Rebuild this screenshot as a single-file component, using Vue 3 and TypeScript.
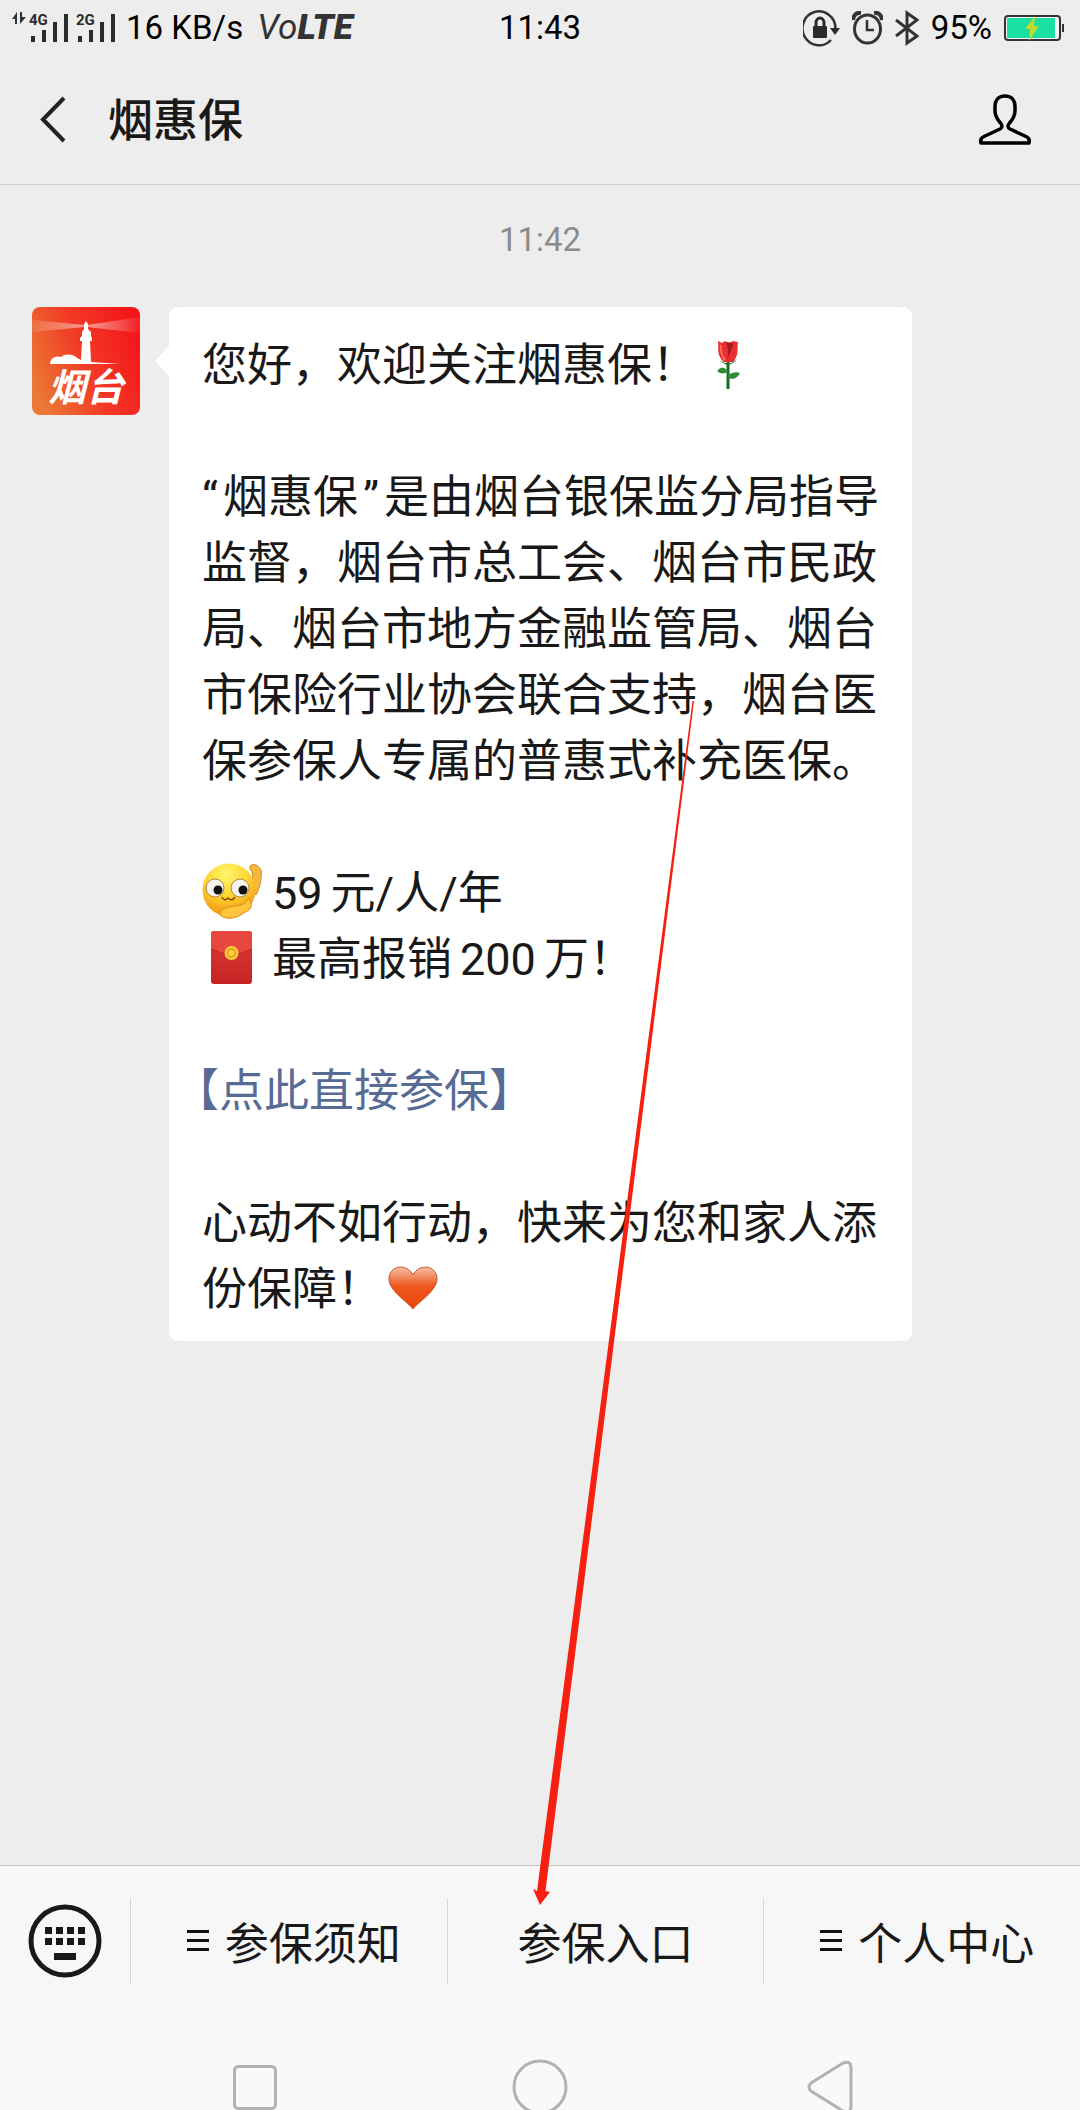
<script setup lang="ts">
interface MenuItem {
  label: string
  expandable: boolean
}

const menu: MenuItem[] = [
  { label: '参保须知', expandable: true },
  { label: '参保入口', expandable: false },
  { label: '个人中心', expandable: true },
]

const keyColumns: number[] = [16, 27, 38, 49]
const keyRows: number[] = [23, 34]
</script>

<template>
  <div class="page">
    <div class="status">
      <div class="status-left">
        <svg class="signal" width="108" height="34" viewBox="0 0 108 34" aria-hidden="true">
          <path d="M0 8 L5 1 V13 H3 V8 Z M8 1 V13 L14 6 H10 V1 Z" fill="#333" />
          <text x="17" y="14" class="net">4G</text>
          <path d="M19 25h4v6h-4z M30 19h4v12h-4z M41 11h4v20h-4z M52 3h4v28h-4z" fill="#2b2b2b" />
          <text x="64" y="14" class="net">2G</text>
          <path d="M66 25h4v6h-4z M77 19h4v12h-4z M88 11h4v20h-4z M99 3h4v28h-4z" fill="#2b2b2b" />
        </svg>
        <span>16 KB/s</span>
        <span class="volte">Vo<b>LTE</b></span>
      </div>
      <span>11:43</span>
      <div class="status-right">
        <svg width="37" height="38" viewBox="0 0 37 38" fill="none" aria-hidden="true">
          <path d="M28 31 A16.500 17 0 1 1 32.500 19" stroke="#333" stroke-width="2.500" />
          <path d="M27 19h10l-5 7z" fill="#2b2b2b" />
          <rect x="10" y="17" width="14" height="12" rx="1" fill="#2b2b2b" />
          <path d="M13 18v-4a4 5 0 0 1 8 0v4" stroke="#2b2b2b" stroke-width="3" />
        </svg>
        <svg width="31" height="34" viewBox="0 0 31 34" fill="none" aria-hidden="true">
          <ellipse cx="15.500" cy="18" rx="13" ry="14" stroke="#333" stroke-width="3" />
          <path d="M15 9v10h7" stroke="#333" stroke-width="2.500" />
          <path d="M1 9 Q2 1 9 2" stroke="#333" stroke-width="4" />
          <path d="M30 9 Q29 1 22 2" stroke="#333" stroke-width="4" />
        </svg>
        <svg class="bluetooth" width="24" height="36" viewBox="0 0 24 36" fill="none" stroke="#333" stroke-width="3" aria-hidden="true">
          <path d="M1 10 L22 26 L12 33 V3 L22 10 L1 26" />
        </svg>
        <span>95%</span>
        <svg class="battery" width="64" height="28" viewBox="0 0 64 28" aria-hidden="true">
          <rect x="1" y="2" width="55" height="24" rx="3" fill="#f4f4f4" stroke="#333" stroke-width="2" />
          <rect x="3" y="4" width="48" height="20" fill="#18e0a0" />
          <rect x="58" y="10" width="2" height="8" fill="#333" />
          <path d="M31 2 L21 15 H26 L25 27 L35 12 H30 Z" fill="#c3d82c" />
        </svg>
      </div>
    </div>

    <header class="header">
      <button class="icon-button" type="button" aria-label="返回">
        <svg width="26" height="48" viewBox="0 0 26 48" fill="none" stroke="#222" stroke-width="4">
          <path d="M24 3 L3 24.500 L24 46" />
        </svg>
      </button>
      <h1>烟惠保</h1>
      <button class="icon-button" type="button" aria-label="公众号资料">
        <svg width="54" height="52" viewBox="0 0 54 52" fill="none" stroke="#000" stroke-width="3.500" stroke-linejoin="round">
          <path d="M27 3 C20 3 17 8 17 13 V18 C17 24 20 27 22.500 30 C25 33 24 35 22 36 L6 43.500 C3 45 2 47 3 50 H51 C52 47 51 45 48 43.500 L32 36 C30 35 29 33 31.500 30 C34 27 37 24 37 18 V13 C37 8 34 3 27 3 Z" />
        </svg>
      </button>
    </header>

    <main class="chat">
      <time class="stamp">11:42</time>
      <div class="message">
        <svg class="avatar" width="108" height="108" viewBox="0 0 108 108" role="img" aria-label="烟台">
          <defs>
            <linearGradient id="avatarBg" x1="0" y1="0.700" x2="1" y2="0.300">
              <stop offset="0" stop-color="#ea7a33" />
              <stop offset="0.500" stop-color="#f23a26" />
              <stop offset="1" stop-color="#f4161a" />
            </linearGradient>
            <linearGradient id="beamLeft" x1="0" x2="1">
              <stop offset="0" stop-color="#fff" stop-opacity="0.100" />
              <stop offset="1" stop-color="#fff" stop-opacity="0.500" />
            </linearGradient>
            <linearGradient id="beamRight" x1="1" x2="0">
              <stop offset="0" stop-color="#fff" stop-opacity="0.050" />
              <stop offset="1" stop-color="#fff" stop-opacity="0.500" />
            </linearGradient>
          </defs>
          <rect width="108" height="108" rx="8" fill="url(#avatarBg)" />
          <path d="M53 18 L0 13 V25 L53 20 Z" fill="url(#beamLeft)" />
          <path d="M55 18 L108 10 V26 L55 20 Z" fill="url(#beamRight)" />
          <path d="M54 14 L56 17 V22 L59 25 V29 L60 31 V34 H58 L59 55 L88 57 H18 C18 51 24 48 29 50 C33 46 42 47 45 51 L49 53 L50 34 H48 V31 L50 29 V25 L52 22 V17 Z" fill="#fff" />
          <text x="54" y="94" text-anchor="middle" class="avatar-name">烟台</text>
        </svg>

        <div class="bubble">
          <p>
            您好，欢迎关注烟惠保！<svg class="emoji" width="60" height="60" viewBox="0 0 60 60" role="img" aria-label="玫瑰">
              <path d="M31 28 V56" stroke="#176b2b" stroke-width="3" />
              <path d="M20 38 Q25 31 31 38 Q26 43 20 38 Z M31 42 Q37 38 43 40 Q39 48 31 45 Z" fill="#2d8b35" />
              <path d="M23 27 Q31 37 40 26 L34 30 L28 30 Z" fill="#28753a" />
              <path d="M21 8 L25 10 L28 8 L32 10 L36 8 L41 9 C40 17 42 22 36 29 H27 C19 22 22 15 21 8 Z" fill="#e9302e" />
              <path d="M29 9 L36 10 C36 17 32 21 30 26 C32 19 31 14 29 9 Z" fill="#a51d22" />
              <path d="M24 12 C23 19 25 23 28 27" stroke="#ff6d60" stroke-width="2" fill="none" />
            </svg>
          </p>
          <p class="section">
            <span class="open">“</span>烟惠保<span class="close">”</span>是由烟台银保监分局指导<br />监督，烟台市总工会、烟台市民政<br />局、烟台市地方金融监管局、烟台<br />市保险行业协会联合支持，烟台医<br />保参保人专属的普惠式补充医保。
          </p>
          <p class="section">
            <svg class="emoji lead" width="60" height="60" viewBox="0 0 60 60" role="img" aria-label="让我看看">
              <defs>
                <radialGradient id="face" cx="0.450" cy="0.200" r="0.850">
                  <stop offset="0" stop-color="#fff66e" />
                  <stop offset="0.500" stop-color="#ffd32d" />
                  <stop offset="1" stop-color="#ef8c14" />
                </radialGradient>
              </defs>
              <path d="M48 5 C52 2 56 4 59 9 C60 17 58 27 54 34 L46 26 C52 19 52 13 48 8 Z" fill="#f7b83c" stroke="#c98a28" stroke-width="1" />
              <circle cx="27" cy="29" r="26.500" fill="url(#face)" />
              <path d="M47 37 C43 45 36 44 27 46 C21 47 18 51 18 54 C25 60 36 57 43 51 C50 49 51 43 47 37 Z" fill="#ffc43a" stroke="#dc8918" stroke-width="1" />
              <circle cx="13" cy="27" r="9" fill="#f4f3ed" stroke="#a98a4d" stroke-width="1" />
              <circle cx="38" cy="27" r="9" fill="#f4f3ed" stroke="#a98a4d" stroke-width="1" />
              <circle cx="16" cy="29" r="4.500" fill="#111" />
              <circle cx="41" cy="29" r="4.500" fill="#111" />
              <path d="M20 36 Q22 41 26 37 Q30 41 33 36" fill="none" stroke="#7a4610" stroke-width="1.500" />
            </svg><span class="figure first">59</span>元/人/年<br /><svg class="emoji lead" width="60" height="60" viewBox="0 0 60 60" role="img" aria-label="红包">
              <defs>
                <linearGradient id="packet" x1="0" y1="0" x2="0" y2="1">
                  <stop offset="0" stop-color="#dc3c36" />
                  <stop offset="1" stop-color="#c52424" />
                </linearGradient>
              </defs>
              <rect x="9" y="4" width="41" height="53" rx="3" fill="url(#packet)" />
              <path d="M9 22 V7 Q9 4 12 4 H47 Q50 4 50 7 V22 Q30 33 9 22 Z" fill="#e8473f" />
              <path d="M9 22 Q30 33 50 22" fill="none" stroke="#b02020" stroke-width="1" />
              <circle cx="29.500" cy="26" r="7" fill="#fbcf3c" />
              <circle cx="29.500" cy="26" r="4" fill="none" stroke="#e8a51f" stroke-width="2" />
            </svg>最高报销<span class="figure">200</span>万！
          </p>
          <p class="section"><a class="link" href="#join">【点此直接参保】</a></p>
          <p class="section">
            心动不如行动，快来为您和家人添<br />份保障！<svg class="emoji" width="60" height="60" viewBox="0 0 60 60" role="img" aria-label="爱心">
              <defs>
                <linearGradient id="heart" x1="0" y1="0" x2="0" y2="1">
                  <stop offset="0" stop-color="#f6c0a8" />
                  <stop offset="0.450" stop-color="#ee571c" />
                  <stop offset="1" stop-color="#ea4508" />
                </linearGradient>
              </defs>
              <path d="M31 52 C27 46 7 34 7 22 C7 8 25 6 31 18 C37 6 55 8 55 22 C55 34 35 46 31 52 Z" fill="url(#heart)" stroke="#c9552b" stroke-width="1" />
            </svg>
          </p>
        </div>
      </div>
    </main>

    <nav class="menu">
      <button class="keyboard" type="button" aria-label="键盘">
        <svg width="74" height="74" viewBox="0 0 74 74">
          <circle cx="37" cy="37" r="34" fill="none" stroke="#191919" stroke-width="5" />
          <template v-for="y in keyRows" :key="y">
            <rect v-for="x in keyColumns" :key="x" :x="x + 1" :y="y" width="7" height="7" fill="#191919" />
          </template>
          <rect x="26" y="49" width="22" height="7" fill="#191919" />
        </svg>
      </button>
      <button v-for="item in menu" :key="item.label" class="entry" :class="{ expandable: item.expandable }" type="button">
        <svg v-if="item.expandable" width="22" height="22" viewBox="0 0 22 22" aria-hidden="true">
          <path d="M0 0h22v3H0z M0 9h22v3H0z M0 18h22v3H0z" fill="#111" />
        </svg>
        <span>{{ item.label }}</span>
      </button>
    </nav>

    <div class="system">
      <button type="button" aria-label="最近任务">
        <svg width="56" height="56" viewBox="0 0 56 56"><rect x="7.500" y="7.500" width="41" height="42" rx="4" /></svg>
      </button>
      <button type="button" aria-label="主屏幕">
        <svg width="56" height="56" viewBox="0 0 56 56"><circle cx="28" cy="28" r="26" /></svg>
      </button>
      <button type="button" aria-label="后退">
        <svg width="56" height="56" viewBox="0 0 56 56">
          <path d="M14 24 L46 4 Q54 1 54 9 V47 Q54 55 46 52 L14 32 Q10 28 14 24 Z" />
        </svg>
      </button>
    </div>

    <svg class="pointer" width="170" height="1206" viewBox="0 0 170 1206" aria-hidden="true">
      <path d="M162.500 0 L164 0 L15.500 1190 L20 1191 L10 1204 L3 1188 L7 1190 Z" fill="#f5200f" />
    </svg>
  </div>
</template>

<style>
body {
  margin: 0;
  background: #ededed;
}
</style>

<style scoped>
.page {
  position: relative;
  display: flex;
  flex-direction: column;
  min-height: 100vh;
  overflow: hidden;
  background: #ededed;
  color: #191919;
  font-family: Roboto, "Noto Sans CJK SC", sans-serif;
}

button {
  margin: 0;
  padding: 0;
  border: 0;
  background: none;
  color: inherit;
  font: inherit;
}

svg {
  flex: none;
}

.status {
  display: grid;
  grid-template-columns: 1fr auto 1fr;
  align-items: center;
  height: 54px;
  padding: 0 12px;
  color: #000;
  font-size: 33px;
  line-height: 56px;
}

.status-left,
.status-right {
  display: flex;
  align-items: center;
}

.status-left {
  gap: 6px;
}

.status-right {
  justify-content: flex-end;
  gap: 12px;
}

.net {
  fill: #2b2b2b;
  font-size: 15px;
  font-weight: 700;
}

.volte {
  margin-left: 8px;
  color: #333;
  font-size: 35px;
  font-style: italic;
}

.volte b {
  font-weight: 900;
}

.header {
  display: flex;
  align-items: center;
  height: 130px;
  padding: 0 48px 0 40px;
  border-bottom: 1px solid #d2d2d2;
}

.icon-button {
  display: flex;
}

h1 {
  flex: 1;
  margin: 0 0 0 42px;
  padding-top: 6px;
  font-size: 45px;
  font-weight: 500;
  line-height: 66px;
}

.chat {
  flex: 1;
  padding: 35px 168px 33px 32px;
}

.stamp {
  display: block;
  margin: 0 -136px 47px 0;
  color: #8c8c8c;
  font-size: 33px;
  line-height: 40px;
  text-align: center;
}

.message {
  display: flex;
  align-items: flex-start;
  gap: 29px;
}

.avatar-name {
  fill: #fff;
  font-family: "Noto Sans CJK SC", sans-serif;
  font-size: 38px;
  font-style: italic;
  font-weight: 700;
}

.bubble {
  position: relative;
  flex: 1;
  padding: 26px 32px 18px 33px;
  border-radius: 9px;
  background: #fff;
  font-size: 45px;
  line-height: 66px;
  white-space: nowrap;
}

.bubble::before {
  content: "";
  position: absolute;
  top: 39px;
  left: -14px;
  border: 15px solid transparent;
  border-right: 14px solid #fff;
  border-left: 0;
}

p {
  margin: 0;
}

.section {
  margin-top: 66px;
}

.emoji {
  margin: -8px 0;
  vertical-align: -4px;
}

.lead {
  margin-right: 10px;
}

.figure {
  margin: 0 8px;
}

.first {
  margin-left: 0;
}

.open {
  margin-right: 5px;
}

.close {
  margin: 0 5px;
}

.link {
  margin-left: -28px;
  color: #576b95;
  text-decoration: none;
}

.menu {
  display: grid;
  grid-template-columns: 130px repeat(3, 1fr);
  align-items: center;
  height: 150px;
  border-top: 1px solid #c4c4c4;
  background: #f7f7f7;
}

.keyboard {
  display: flex;
  justify-content: center;
}

.entry {
  display: flex;
  align-items: center;
  justify-content: center;
  gap: 16px;
  box-sizing: border-box;
  height: 86px;
  border-left: 1px solid #d6d6d6;
  font-size: 44px;
  line-height: 66px;
}

.entry span {
  padding-top: 7px;
}

.expandable {
  padding-left: 10px;
}

.system {
  display: grid;
  grid-template-columns: repeat(3, 1fr);
  height: 94px;
  padding: 0 112px;
  overflow: hidden;
  box-sizing: border-box;
  background: #f9f9f9;
}

.system button {
  display: flex;
  justify-content: center;
  padding-top: 43px;
}

.system svg {
  fill: none;
  stroke: #b2b2b2;
  stroke-width: 3px;
}

.pointer {
  position: absolute;
  top: 701px;
  left: calc(50% - 10px);
  pointer-events: none;
}
</style>
